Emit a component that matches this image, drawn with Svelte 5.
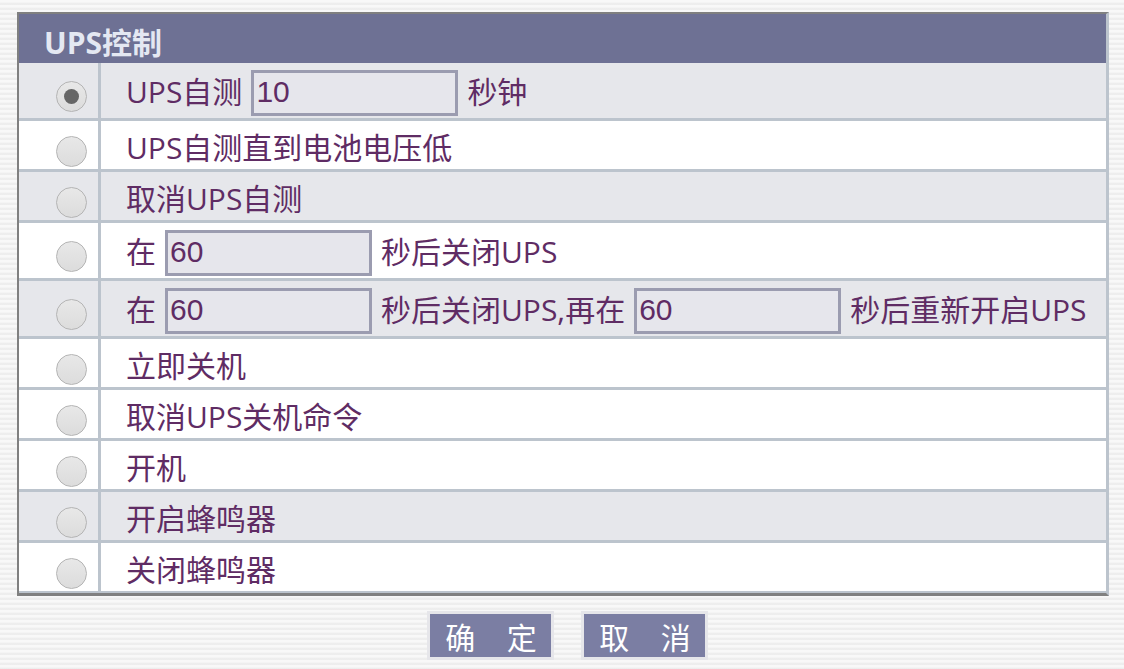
<script>
    let selected = $state(0);

    const rows = [
        { parts: ["UPS自测", { v: "10" }, "秒钟"], shade: true, tall: true },
        { parts: ["UPS自测直到电池电压低"] },
        { parts: ["取消UPS自测"], shade: true },
        { parts: ["在", { v: "60" }, "秒后关闭UPS"], tall: true },
        { parts: ["在", { v: "60" }, "秒后关闭UPS,再在", { v: "60" }, "秒后重新开启UPS"], shade: true, tall: true },
        { parts: ["立即关机"] },
        { parts: ["取消UPS关机命令"] },
        { parts: ["开机"] },
        { parts: ["开启蜂鸣器"], shade: true },
        { parts: ["关闭蜂鸣器"] },
    ];
</script>

<div class="page">
    <div class="panel">
        <div class="title">UPS控制</div>
        {#each rows as row, i}
            <div class="row" class:shade={row.shade} class:tall={row.tall} class:last={i === rows.length - 1}>
                <div class="radio-cell">
                    <button
                        class="radio"
                        class:checked={selected === i}
                        aria-label="选择"
                        onclick={() => (selected = i)}
                    ></button>
                </div>
                <div class="content">
                    {#each row.parts as part}
                        {#if typeof part === "string"}
                            <span>{part}</span>
                        {:else}
                            <input class="field" value={part.v} />
                        {/if}
                    {/each}
                </div>
            </div>
        {/each}
    </div>
    <div class="actions">
        <button class="btn">确 定</button>
        <button class="btn">取 消</button>
    </div>
</div>

<style>
    :global(body) {
        background: #f2f2f2;
    }

    .page {
        height: 669px;
        box-sizing: border-box;
        padding: 12px 15px 0 17px;
        background: repeating-linear-gradient(
            to bottom,
            #f8f8f8 0,
            #f8f8f8 2px,
            #f0f0f0 3px,
            #ebebeb 4px,
            #f0f0f0 5px
        );
        font-family: "Open Sans", "Noto Sans CJK SC", sans-serif;
        overflow: hidden;
    }

    .panel {
        border-style: solid;
        border-color: #808080 #bcc4cd #808080 #808080;
        border-width: 2px 3px 3px 2px;
        background: #fff;
    }

    .title {
        height: 49px;
        box-sizing: border-box;
        padding: 11px 0 0 25px;
        background: #6e7194;
        color: #e4e8f2;
        font-size: 30px;
        font-weight: 700;
        line-height: 36px;
    }

    .row {
        display: flex;
        height: 51px;
        box-sizing: border-box;
        border-bottom: 3px solid #bcc4cd;
        color: #5f2c64;
        font-size: 30px;
    }

    .row.tall {
        height: 58px;
    }

    .row.last {
        border-bottom-width: 2px;
        height: 50px;
    }

    .row.shade {
        background: #e6e7eb;
    }

    .radio-cell {
        width: 79px;
        flex: none;
        display: flex;
        justify-content: center;
        align-items: center;
        border-right: 3px solid #bcc4cd;
    }

    .radio {
        width: 31px;
        height: 31px;
        margin: 13px 0 0 25px;
        padding: 0;
        border: 1px solid #b4b4b4;
        border-radius: 50%;
        background: linear-gradient(#e8e8e8, #dcdcdc);
        position: relative;
    }

    .tall .radio {
        margin-top: 11px;
    }

    .radio.checked::after {
        content: "";
        position: absolute;
        left: 7px;
        top: 7px;
        width: 15px;
        height: 15px;
        border-radius: 50%;
        background: #666;
    }

    .content {
        display: flex;
        align-items: center;
        gap: 9px;
        padding: 2px 0 0 25px;
        white-space: nowrap;
    }

    .tall .content {
        padding-top: 4px;
    }

    .tall span {
        margin-bottom: 5px;
    }

    .field {
        width: 207px;
        height: 46px;
        box-sizing: border-box;
        padding: 0 2px 2px;
        border: 3px solid #9b9cb0;
        border-radius: 0;
        background: #e6e6ec;
        color: #5f2c64;
        font-family: "Liberation Sans", sans-serif;
        font-size: 30px;
    }

    .actions {
        display: flex;
        justify-content: center;
        gap: 27px;
        margin-top: 15px;
        padding-left: 8px;
    }

    .btn {
        width: 127px;
        height: 49px;
        box-sizing: border-box;
        border: 3px solid #e6e6ea;
        background: #7b7ea3;
        color: #fff;
        font-family: "Noto Sans CJK SC", sans-serif;
        font-size: 30px;
        line-height: 1;
        padding: 0 0 0 2px;
        word-spacing: 25px;
    }
</style>
